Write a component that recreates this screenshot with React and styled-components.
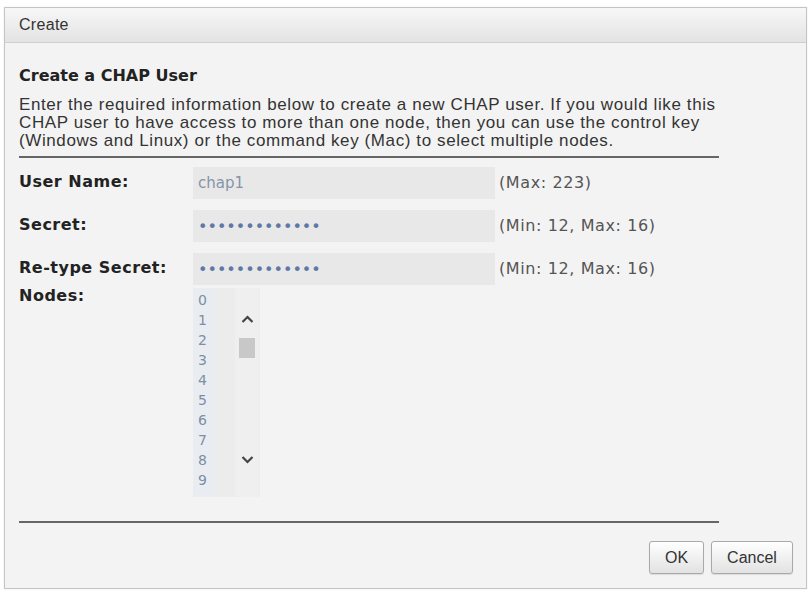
import React from "react";
import styled, { createGlobalStyle } from "styled-components";

const Global = createGlobalStyle`
  html, body { margin: 0; padding: 0; background: #ffffff; }
  body { width: 812px; height: 592px; overflow: hidden; }
`;

const Dialog = styled.div`
  box-sizing: border-box;
  margin: 7px 0 0 4px;
  width: 803px;
  height: 582px;
  border: 1px solid #c4c4c4;
  background: #f3f3f3;
  display: flex;
  flex-direction: column;
  box-shadow: 0 0 2px rgba(0,0,0,0.08);
`;

const Header = styled.div`
  box-sizing: border-box;
  height: 35px;
  flex: none;
  padding: 0 14px;
  display: flex;
  align-items: center;
  background: linear-gradient(#f7f7f7, #e3e3e3);
  border-bottom: 1px solid #cfcfcf;
  font-family: "Liberation Sans", Arial, sans-serif;
  font-size: 16px;
  letter-spacing: 0.3px;
  color: #333;
`;

const Body = styled.div`
  flex: 1;
  display: flex;
  flex-direction: column;
  padding: 24px 0 0 14px;
`;

const Content = styled.div`
  width: 700px;
`;

const Title = styled.div`
  font-family: "DejaVu Sans", Verdana, sans-serif;
  font-weight: bold;
  font-size: 16px;
  color: #222;
  line-height: 18px;
  margin-bottom: 11px;
`;

const Para = styled.p`
  margin: 0;
  font-family: "Liberation Sans", Arial, sans-serif;
  font-size: 17px;
  letter-spacing: 0.6px;
  line-height: 18px;
  color: #333;
  white-space: nowrap;
  padding-bottom: 6px;
  border-bottom: 2px solid #666;
`;

const Form = styled.div`
  display: grid;
  grid-template-columns: 174px 302px auto;
  align-items: center;
  row-gap: 11px;
  margin-top: 9px;
`;

const Label = styled.div`
  font-family: "DejaVu Sans", Verdana, sans-serif;
  font-weight: bold;
  font-size: 16px;
  letter-spacing: 0.5px;
  line-height: 19px;
  color: #222;
  align-self: ${(p) => (p.$top ? "start" : "center")};
  margin-top: ${(p) => (p.$top ? "-10px" : "0")};
  padding-bottom: ${(p) => (p.$top ? "0" : "4px")};
`;

const Field = styled.div`
  height: 32px;
  background: #e8e8e8;
  display: flex;
  align-items: center;
  padding-left: 5px;
  font-family: "DejaVu Sans", Verdana, sans-serif;
  font-size: ${(p) => (p.$dots ? "16px" : "15px")};
  color: ${(p) => (p.$dots ? "#5f79a6" : "#8694a8")};
`;

const Hint = styled.div`
  padding-left: 4px;
  padding-bottom: 2px;
  font-family: "DejaVu Sans", Verdana, sans-serif;
  font-size: 16px;
  letter-spacing: 0.6px;
  color: #555;
`;

const ListBox = styled.div`
  width: 67px;
  height: 209px;
  background: #ececec;
  display: flex;
  margin-top: -8px;
`;

const Items = styled.div`
  width: 18px;
  padding: 2px 0 0 5px;
  background: #e9edf1;
  font-family: "DejaVu Sans", Verdana, sans-serif;
  font-size: 14px;
  line-height: 20px;
  color: #7d8ea6;
`;

const Scroll = styled.div`
  width: 24px;
  margin-left: 19px;
  background: #efefef;
  display: flex;
  flex-direction: column;
  align-items: center;
  padding-top: 27px;
`;

const Thumb = styled.div`
  width: 16px;
  height: 20px;
  background: #c8c8c8;
  margin-top: 14px;
`;

const Spacer = styled.div`
  flex: 1;
`;

const BottomGap = styled.div`
  height: 33px;
`;

const Footer = styled.div`
  margin-top: auto;
  display: flex;
  flex-direction: column;
`;

const Rule = styled.div`
  width: 700px;
  height: 2px;
  background: #666;
`;

const Buttons = styled.div`
  display: flex;
  justify-content: flex-end;
  gap: 7px;
  padding: 18px 13px 14px 0;
`;

const Button = styled.button`
  box-sizing: border-box;
  height: 33px;
  min-width: ${(p) => p.$w}px;
  border: 1px solid #a9a9a9;
  border-radius: 3px;
  background: linear-gradient(#ffffff, #e2e2e2);
  font-family: "Liberation Sans", Arial, sans-serif;
  font-size: 16px;
  color: #333;
  padding: 0 10px;
  box-shadow: 0 1px 1px rgba(0,0,0,0.1);
`;

const Chevron = ({ down }) => (
  <svg width="13" height="9" viewBox="0 0 13 9">
    <path
      d={down ? "M1.5 2 L6.5 7 L11.5 2" : "M1.5 7 L6.5 2 L11.5 7"}
      fill="none"
      stroke="#444"
      strokeWidth="2.2"
    />
  </svg>
);

export default function App() {
  return (
    <>
      <Global />
      <Dialog>
        <Header>Create</Header>
        <Body>
          <Content>
            <Title>Create a CHAP User</Title>
            <Para>
              Enter the required information below to create a new CHAP user. If you would like this
              <br />
              CHAP user to have access to more than one node, then you can use the control key
              <br />
              (Windows and Linux) or the command key (Mac) to select multiple nodes.
            </Para>
            <Form>
              <Label>User Name:</Label>
              <Field>chap1</Field>
              <Hint>(Max: 223)</Hint>
              <Label>Secret:</Label>
              <Field $dots>•••••••••••••</Field>
              <Hint>(Min: 12, Max: 16)</Hint>
              <Label>Re-type Secret:</Label>
              <Field $dots>•••••••••••••</Field>
              <Hint>(Min: 12, Max: 16)</Hint>
              <Label $top>Nodes:</Label>
              <ListBox>
                <Items>
                  {[0, 1, 2, 3, 4, 5, 6, 7, 8, 9].map((n) => (
                    <div key={n}>{n}</div>
                  ))}
                </Items>
                <Scroll>
                  <Chevron />
                  <Thumb />
                  <Spacer />
                  <Chevron down />
                  <BottomGap />
                </Scroll>
              </ListBox>
              <div />
            </Form>
          </Content>
          <Footer>
            <Rule />
            <Buttons>
              <Button $w={55}>OK</Button>
              <Button $w={82}>Cancel</Button>
            </Buttons>
          </Footer>
        </Body>
      </Dialog>
    </>
  );
}
